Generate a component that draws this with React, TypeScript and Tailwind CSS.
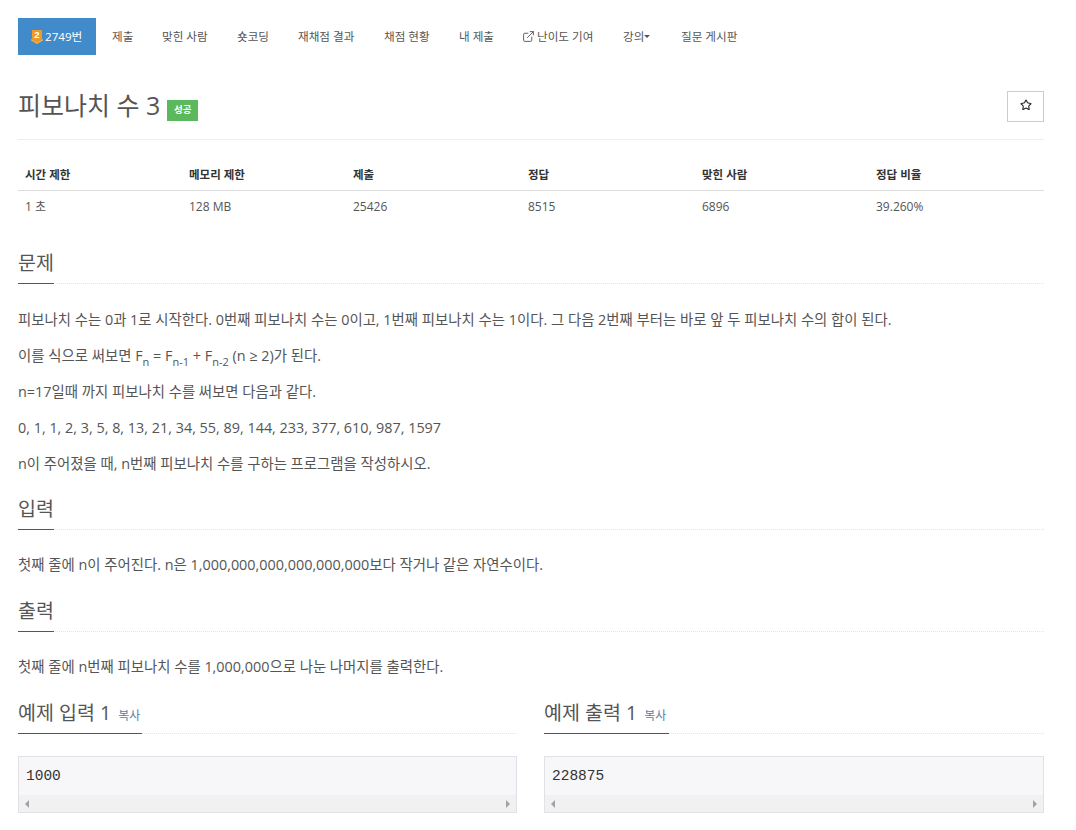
import React from "react";
import { ExternalLink, Star } from "lucide-react";

function Heading({ children, width }: { children: React.ReactNode; width: string }) {
  return (
    <div className="h-[32px] border-b border-dotted border-[#e5e5e5]">
      <div className={`h-[32px] border-b border-[#0e6aad] text-[19.5px] leading-[22px] text-[#555] whitespace-nowrap ${width}`}>
        {children}
      </div>
    </div>
  );
}

function Scrollbar() {
  return (
    <div className="h-[17px] bg-[#f1f1f1] flex items-center justify-between px-[5px]">
      <svg width="6" height="8" viewBox="0 0 6 8"><path d="M5 0v8L1 4z" fill="#a3a3a3" /></svg>
      <svg width="6" height="8" viewBox="0 0 6 8"><path d="M1 0v8l4-4z" fill="#a3a3a3" /></svg>
    </div>
  );
}

function Sample({ value, title, width }: { value: string; title: string; width: string }) {
  return (
    <div>
      <Heading width={width}>
        {title} <span className="text-[12px] text-[#5a7fa8] ml-[2px]">복사</span>
      </Heading>
      <div className="mt-[22px] border border-[#e1e1e8] bg-[#f7f7f9] h-[57px] flex flex-col">
        <div className="flex-1 px-[7px] pt-[9px] text-[14.5px] leading-[21px] text-[#333] font-['Liberation_Mono',monospace]">{value}</div>
        <Scrollbar />
      </div>
    </div>
  );
}

const navItems = ["제출", "맞힌 사람", "숏코딩", "재채점 결과", "채점 현황", "내 제출"];
const navWidths = ["w-[50px]", "w-[75px]", "w-[61px]", "w-[86px]", "w-[75px]", "w-[63px]"];

const cols = [
  ["시간 제한", "1 초", "w-[164px]"],
  ["메모리 제한", "128 MB", "w-[164px]"],
  ["제출", "25426", "w-[175px]"],
  ["정답", "8515", "w-[174px]"],
  ["맞힌 사람", "6896", "w-[174px]"],
  ["정답 비율", "39.260%", "flex-1"],
];

const sub = "text-[11px] align-[-2px] leading-none";

export default function App() {
  return (
    <div className="w-[1076px] h-[830px] overflow-hidden bg-white pl-[18px] pr-[32px] pt-[18px] font-['Open_Sans','Noto_Sans_CJK_KR',sans-serif] text-[#555]">
      <nav className="flex h-[37px] items-center text-[11.6px] text-[#555]">
        <div className="w-[78px] h-[37px] bg-[#428bca] text-white flex items-center pl-[13px] gap-[2px] mr-[16px] text-[11.6px]">
          <svg width="12" height="15" viewBox="0 0 12 15">
            <path d="M1 1h10v9.500l-5 2.500-5-2.500z" fill="#ec9a29" />
            <path d="M0 10l6 3 6-3v1.500L6 15 0 11.500z" fill="#f5b041" />
            <text x="6" y="9" fontSize="9.500" fontWeight="700" textAnchor="middle" fill="#fff" fontFamily="Liberation Sans, sans-serif">2</text>
          </svg>
          <span>2749번</span>
        </div>
        {navItems.map((t, i) => (
          <div key={t} className={`${navWidths[i]} whitespace-nowrap`}>{t}</div>
        ))}
        <div className="w-[101px] flex items-center gap-[2px] whitespace-nowrap">
          <ExternalLink size={13} strokeWidth={1.7} />
          <span>난이도 기여</span>
        </div>
        <div className="w-[58px] flex items-center whitespace-nowrap">
          <span>강의</span>
          <span className="mt-[1px] border-x-[3px] border-t-[3px] border-x-transparent border-t-[#555]" />
        </div>
        <div className="whitespace-nowrap">질문 게시판</div>
      </nav>

      <div className="h-[85px] border-b border-[#eee] flex items-start justify-between">
        <div className="flex items-start pt-[34px]">
          <span className="text-[25px] leading-[32px] text-[#555]">피보나치 수 3</span>
          <span className="ml-[7px] mt-[12px] -translate-y-px w-[31px] h-[21px] bg-[#5cb85c] text-white text-[9.5px] font-bold flex items-center justify-center">성공</span>
        </div>
        <div className="mt-[36px] w-[37px] h-[31px] border border-[#ccc] flex items-center justify-center pb-[3px] text-[#222]">
          <Star size={12} strokeWidth={2.2} />
        </div>
      </div>

      <div className="mt-[20px]">
        <div className="flex h-[31px] border-b border-[#ddd] text-[11.5px] font-bold text-[#333]">
          {cols.map((c) => (
            <div key={c[0]} className={`${c[2]} pl-[7px] pt-[5px] leading-[20px] whitespace-nowrap`}>{c[0]}</div>
          ))}
        </div>
        <div className="flex h-[31px] text-[12px] text-[#555]">
          {cols.map((c) => (
            <div key={c[0]} className={`${c[2]} pl-[7px] pt-[6px] leading-[20px] whitespace-nowrap`}>{c[1]}</div>
          ))}
        </div>
      </div>

      <div className="mt-[30px]"><Heading width="w-[36px]">문제</Heading></div>
      <div className="mt-[26px] flex flex-col gap-[16px] text-[14.4px] leading-[20px] text-[#555]">
        <p>피보나치 수는 0과 1로 시작한다. 0번째 피보나치 수는 0이고, 1번째 피보나치 수는 1이다. 그 다음 2번째 부터는 바로 앞 두 피보나치 수의 합이 된다.</p>
        <p>이를 식으로 써보면 F<sub className={sub}>n</sub> = F<sub className={sub}>n-1</sub> + F<sub className={sub}>n-2</sub> (n ≥ 2)가 된다.</p>
        <p>n=17일때 까지 피보나치 수를 써보면 다음과 같다.</p>
        <p>0, 1, 1, 2, 3, 5, 8, 13, 21, 34, 55, 89, 144, 233, 377, 610, 987, 1597</p>
        <p>n이 주어졌을 때, n번째 피보나치 수를 구하는 프로그램을 작성하시오.</p>
      </div>

      <div className="mt-[24px]"><Heading width="w-[36px]">입력</Heading></div>
      <p className="mt-[25px] text-[14.4px] leading-[20px]">첫째 줄에 n이 주어진다. n은 1,000,000,000,000,000,000보다 작거나 같은 자연수이다.</p>

      <div className="mt-[25px]"><Heading width="w-[36px]">출력</Heading></div>
      <p className="mt-[25px] text-[14.4px] leading-[20px]">첫째 줄에 n번째 피보나치 수를 1,000,000으로 나눈 나머지를 출력한다.</p>

      <div className="mt-[25px] grid grid-cols-[499px_500px] gap-[27px]">
        <Sample title="예제 입력 1" value="1000" width="w-[124px]" />
        <Sample title="예제 출력 1" value="228875" width="w-[125px]" />
      </div>
    </div>
  );
}
